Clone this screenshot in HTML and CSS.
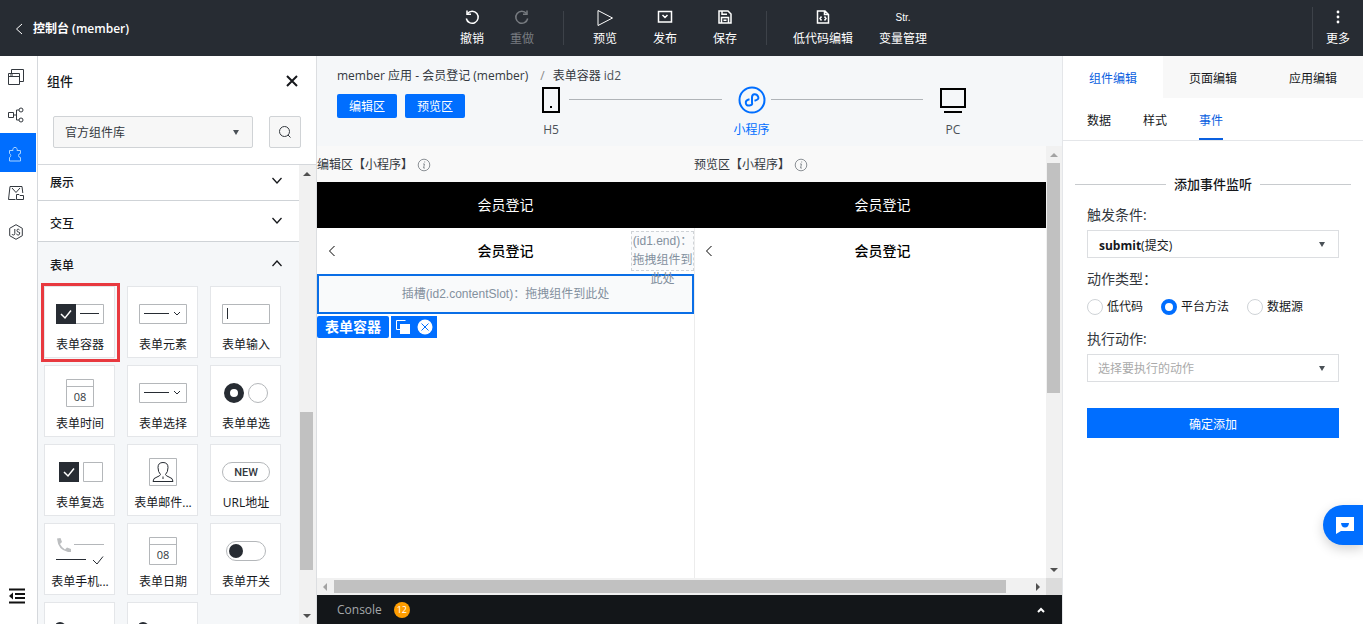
FILE: index.html
```html
<!DOCTYPE html>
<html lang="zh-CN">
<head>
<meta charset="utf-8">
<title>控制台 (member)</title>
<link rel="stylesheet" href="styles.css">
</head>
<body>
<header class="topbar">
  <a class="back" href="#"><svg width="8" height="12" viewBox="0 0 8 12"><path d="M7 1L1.500 6L7 11"/></svg>控制台 (member)</a>
  <nav class="tools">
    <button class="tool"><svg width="16" height="16" viewBox="0 0 16 16"><path d="M3.500 4.500A6 6 0 1 1 2.300 9.500"/><path d="M3 1.500V5.200H7"/></svg>撤销</button>
    <button class="tool off"><svg width="16" height="16" viewBox="0 0 16 16"><path d="M12.500 4.500A6 6 0 1 0 13.700 9.500"/><path d="M13 1.500V5.200H9"/></svg>重做</button>
    <span class="split"></span>
    <button class="tool mid"><svg width="18" height="18" viewBox="0 0 18 18"><path class="thin" d="M2 1.500V16.500L16.500 9Z"/></svg>预览</button>
    <button class="tool mid"><svg width="16" height="16" viewBox="0 0 16 16"><path d="M1.500 2.500H14.500V13H1.500ZM5.500 6L8 8.500L10.500 6"/></svg>发布</button>
    <button class="tool mid"><svg width="16" height="16" viewBox="0 0 16 16"><path d="M2 2H11L14 5V14H2ZM4.500 14V8.500H11.500V14M5 2V5.200H10M6.500 11.200H9.500"/></svg>保存</button>
    <span class="split second"></span>
    <button class="tool wide"><svg width="16" height="16" viewBox="0 0 16 16"><path d="M2.500 2H10L13.500 5.500V14H2.500ZM9.500 2V5.500H13M6.500 7.500L5 9.500L6.500 11.500M9.500 7.500L11 9.500L9.500 11.500"/></svg>低代码编辑</button>
    <button class="tool wide"><span class="str">Str.</span>变量管理</button>
  </nav>
  <button class="tool more"><svg width="16" height="16" viewBox="0 0 16 16"><g class="solid"><circle cx="8" cy="3" r="1.400"/><circle cx="8" cy="8" r="1.400"/><circle cx="8" cy="13" r="1.400"/></g></svg>更多</button>
</header>

<div class="work">
  <nav class="rail">
    <button aria-label="页面"><svg width="16" height="16" viewBox="0 0 16 16"><path d="M.5 4.500H11.500V15.500H.5ZM.5 7.500H11.500M3.500 4.500V.5H15.500V12.500H11.500M2 6H5"/></svg></button>
    <button aria-label="流程"><svg width="16" height="16" viewBox="0 0 16 16"><path d="M.5 5.500H5.500V10.500H.5ZM5.500 8H8.500M11 3H8.500V13H11"/><circle cx="13" cy="3" r="2"/><circle cx="13" cy="13" r="2"/></svg></button>
    <button class="on" aria-label="组件"><svg width="16" height="16" viewBox="0 0 16 16"><path d="M1.500 4.500H5A2.200 2.200 0 1 1 9 4.500H12.500V7.500A2 2 0 1 0 12.500 11.500V15H1.500V11.500A2.200 2.200 0 0 0 1.500 7.500Z"/></svg></button>
    <button aria-label="素材"><svg width="16" height="16" viewBox="0 0 16 16"><path d="M7.500 14.500H.5L2 1.500H14L14.800 8M4 3L8 7.500L12 3"/><path d="M8.500 9.500H11L12 10.500H15.500V14.500H8.500Z"/></svg></button>
    <button aria-label="脚本"><svg width="16" height="16" viewBox="0 0 16 16"><path d="M8 .7L14.300 4.300V11.700L8 15.300L1.700 11.700V4.300Z"/><path d="M6.800 5V9.500Q6.800 11 5.500 11T4 10M11.500 6Q10.800 5 9.800 5.200T9 6.800T10.800 8.200T11.500 10T9.800 11T8.300 10"/></svg></button>
    <button class="fold" aria-label="收起"><svg width="18" height="16" viewBox="0 0 18 16"><path d="M1 1.500H17M7 6H17M7 10H17M1 14.500H17"/><path class="solid" d="M5 4.500V11.500L1 8Z"/></svg></button>
  </nav>

  <aside class="panel">
    <div class="panel-head">
      <h2>组件</h2>
      <button class="close" aria-label="关闭"><svg width="12" height="12" viewBox="0 0 12 12"><path d="M1 1L11 11M11 1L1 11"/></svg></button>
    </div>
    <div class="finder">
      <span class="drop gray"><select aria-label="组件库"><option>官方组件库</option></select></span>
      <button class="search" aria-label="搜索"><svg width="14" height="14" viewBox="0 0 14 14"><circle cx="6.500" cy="6.500" r="5"/><path d="M10 10L12.500 12.500"/></svg></button>
    </div>
    <div class="scroller">
      <div class="list">
        <button class="group first">展示<svg width="12" height="8" viewBox="0 0 12 8"><path d="M1.500 1L6 6L10.500 1"/></svg></button>
        <button class="group">交互<svg width="12" height="8" viewBox="0 0 12 8"><path d="M1.500 1L6 6L10.500 1"/></svg></button>
        <section class="open">
          <button class="group">表单<svg width="12" height="8" viewBox="0 0 12 8"><path d="M1.500 7L6 2L10.500 7"/></svg></button>
          <div class="cards">
            <div class="card picked"><svg width="48" height="30" viewBox="0 0 48 30"><path class="line" d="M20 5.500H47.500V24.500H20"/><path class="fill" d="M0 5H20V25H0Z"/><path class="white" d="M5 15L9 19L15 11.500"/><path class="dark" d="M24 14.500H43"/></svg>表单容器</div>
            <div class="card"><svg width="48" height="30" viewBox="0 0 48 30"><path class="line" d="M.5 5.500H47.500V24.500H.5Z"/><path class="dark" d="M5 14.500H30M35 13L38 16L41 13"/></svg>表单元素</div>
            <div class="card"><svg width="48" height="30" viewBox="0 0 48 30"><path class="line" d="M.5 5.500H47.500V24.500H.5Z"/><path class="dark" d="M5.500 9V20"/></svg>表单输入</div>
            <div class="card"><svg width="48" height="30" viewBox="0 0 48 30"><path class="line" d="M10.500 1.500H37.500V28.500H10.500ZM10.500 8.500H37.500"/><text x="24" y="23">08</text></svg>表单时间</div>
            <div class="card"><svg width="48" height="30" viewBox="0 0 48 30"><path class="line" d="M.5 5.500H47.500V24.500H.5Z"/><path class="dark" d="M5 14.500H30M35 13L38 16L41 13"/></svg>表单选择</div>
            <div class="card"><svg width="48" height="30" viewBox="0 0 48 30"><circle class="ring" cx="12" cy="15" r="7"/><circle class="line" cx="36" cy="15" r="9.500"/></svg>表单单选</div>
            <div class="card"><svg width="48" height="30" viewBox="0 0 48 30"><path class="fill" d="M3 5H23V25H3Z"/><path class="white" d="M8 15L12 19L18 11.500"/><path class="line" d="M27.500 5.500H46.500V24.500H27.500Z"/></svg>表单复选</div>
            <div class="card"><svg width="48" height="30" viewBox="0 0 48 30"><path class="line" d="M10.500 1.500H37.500V28.500H10.500Z"/><path class="dark" d="M21.500 17.500Q19 15 19 10.500Q19 5.500 24 5.500T29 10.500Q29 15 26.500 17.500Q27 19 30 20Q34 21 34 24.500H14Q14 21 18 20Q21 19 21.500 17.500ZM24 19.500V22"/></svg>表单邮件...</div>
            <div class="card"><svg width="48" height="30" viewBox="0 0 48 30"><rect class="line" x=".5" y="5.500" width="47" height="19" rx="9.500"/><text class="new" x="24" y="19">NEW</text></svg>URL地址</div>
            <div class="card"><svg width="48" height="30" viewBox="0 0 48 30"><path class="pale" d="M1 2.500L4.500 2L6 6L4 8Q6 12 9 13.500L11 11.500L15 13V16H12Q2 14 1 2.500Z"/><path class="line" d="M18 8.500H48"/><path class="dark" d="M0 23.500H30M37 24L41 28L47 20.500"/></svg>表单手机...</div>
            <div class="card"><svg width="48" height="30" viewBox="0 0 48 30"><path class="line" d="M10.500 1.500H37.500V28.500H10.500ZM10.500 8.500H37.500"/><text x="24" y="23">08</text></svg>表单日期</div>
            <div class="card"><svg width="48" height="30" viewBox="0 0 48 30"><rect class="line" x="4.500" y="5.500" width="39" height="19" rx="9.500"/><circle class="fill" cx="14" cy="15" r="7"/></svg>表单开关</div>
            <div class="card"><svg width="48" height="30" viewBox="0 0 48 30"><circle class="fill" cx="4" cy="13" r="6"/></svg></div>
            <div class="card"><svg width="48" height="30" viewBox="0 0 48 30"><circle class="fill" cx="4" cy="13" r="6"/></svg></div>
          </div>
        </section>
      </div>
      <div class="bar-v"><i class="tri up"></i><i class="thumb low"></i><i class="tri down"></i></div>
    </div>
  </aside>

  <main class="stage">
    <div class="stage-head">
      <div class="crumbs"><span>member 应用 - 会员登记 (member)</span><span class="slash">/</span><span>表单容器 <span class="dim">id2</span></span></div>
      <div class="stage-row">
        <button class="blue">编辑区</button>
        <button class="blue">预览区</button>
        <div class="steps">
          <div class="step h5"><svg width="20" height="28" viewBox="0 0 20 28"><path d="M2 2H18V26H2Z"/><path class="solid" d="M9 20H11V22H9Z"/></svg>H5</div>
          <i class="wire one"></i>
          <div class="step mp"><svg width="28" height="28" viewBox="0 0 28 28"><circle cx="14" cy="14" r="12.500"/><path d="M11.500 13.200Q7.500 14 7.800 17T11.500 19.500T14 16.500V11.500Q14 8.500 16.500 8.300T20.200 10.800T16.500 14.800"/></svg>小程序</div>
          <i class="wire two"></i>
          <div class="step pc"><svg width="26" height="28" viewBox="0 0 26 28"><path d="M1 3H25V21H1ZM4 26H22"/></svg>PC</div>
        </div>
      </div>
    </div>

    <div class="canvas">
      <div class="phones">
        <section class="phone">
          <div class="caption">编辑区【小程序】<svg width="14" height="14" viewBox="0 0 14 14"><circle cx="7" cy="7" r="5.800"/><path d="M7.700 3.500V4.500M6 6H7.500L6.500 10H8"/></svg></div>
          <div class="black">会员登记</div>
          <div class="nav"><svg width="8" height="12" viewBox="0 0 8 12"><path d="M6.500 1L1.500 6L6.500 11"/></svg>会员登记<div class="endslot">(id1.end)：拖拽组件到此处</div></div>
          <div class="slot">插槽(id2.contentSlot)：拖拽组件到此处</div>
          <div class="tags"><span class="tag">表单容器</span><span class="acts"><button aria-label="复制"><svg width="14" height="14" viewBox="0 0 14 14"><path d="M.5 9.500V.5H9.500M.5 9.500H4"/><path class="solid" d="M4 4H14V14H4Z"/></svg></button><button aria-label="删除"><svg width="16" height="16" viewBox="0 0 16 16"><circle class="solid" cx="8" cy="8" r="7.500"/><path class="cross" d="M4.500 4.500L11.500 11.500M11.500 4.500L4.500 11.500"/></svg></button></span></div>
        </section>
        <section class="phone">
          <div class="caption">预览区【小程序】<svg width="14" height="14" viewBox="0 0 14 14"><circle cx="7" cy="7" r="5.800"/><path d="M7.700 3.500V4.500M6 6H7.500L6.500 10H8"/></svg></div>
          <div class="black">会员登记</div>
          <div class="nav"><svg width="8" height="12" viewBox="0 0 8 12"><path d="M6.500 1L1.500 6L6.500 11"/></svg>会员登记</div>
        </section>
      </div>
      <div class="bar-v"><i class="tri up faint"></i><i class="thumb high"></i><i class="tri down"></i></div>
      <div class="bar-h"><i class="tri left faint"></i><i class="thumb-h"></i><i class="tri right"></i></div>
      <div class="corner"></div>
    </div>

    <div class="console">Console<span class="count">12</span><button aria-label="展开"><svg width="8" height="6" viewBox="0 0 8 6"><path d="M1 5L4 2L7 5"/></svg></button></div>
  </main>

  <aside class="props">
    <div class="tabs"><button class="on">组件编辑</button><button>页面编辑</button><button>应用编辑</button></div>
    <div class="subtabs"><button>数据</button><button>样式</button><button class="on">事件</button></div>
    <h3 class="legend">添加事件监听</h3>
    <form class="form">
      <label for="trigger">触发条件:</label>
      <span class="drop"><select id="trigger"><option value="submit"></option></select><span class="value"><b>submit</b>(提交)</span></span>
      <div class="label" id="kind">动作类型：</div>
      <div class="radios" role="radiogroup" aria-labelledby="kind">
        <label><input type="radio" name="kind">低代码</label>
        <label><input type="radio" name="kind" checked>平台方法</label>
        <label><input type="radio" name="kind">数据源</label>
      </div>
      <label for="action">执行动作:</label>
      <span class="drop"><select id="action" class="empty"><option>选择要执行的动作</option></select></span>
      <button class="submit" type="button">确定添加</button>
    </form>
    <button class="chat" aria-label="客服"><svg width="18" height="18" viewBox="0 0 18 18"><path class="solid" d="M0 1H18V15H5L0 18Z"/><path class="smile" d="M5 7H13Q12.500 11.500 9 11.500T5 7Z"/></svg></button>
  </aside>
</div>
</body>
</html>
```
FILE: styles.css
```css
* { box-sizing: border-box; }
body {
  margin: 0;
  height: 100vh;
  display: flex;
  flex-direction: column;
  overflow: hidden;
  font: 12px/20px "Open Sans", "Noto Sans CJK SC", sans-serif;
  color: #16181c;
  background: #fff;
}
button, select, input { font: inherit; color: inherit; margin: 0; }
button { border: 0; padding: 0; background: none; }
svg { display: block; flex: none; fill: none; stroke: currentColor; }
h2, h3 { margin: 0; }
.solid { fill: currentColor; stroke: none; }

/* Top bar */
.topbar { flex: none; height: 56px; display: flex; align-items: center; background: #272c33; color: #fff; }
.back {
  flex: 0 0 447px;
  display: flex;
  align-items: center;
  gap: 10px;
  padding: 2px 0 0 15px;
  color: #fff;
  font-weight: 600;
  text-decoration: none;
}
.tools { display: flex; align-items: center; }
.tool { width: 50px; height: 42px; display: flex; flex-direction: column; align-items: center; justify-content: space-between; padding-top: 2px; white-space: nowrap; }
.tool svg { stroke-width: 1.5; }
.tool .thin { stroke-width: 1; }
.tool.mid { width: 60px; }
.tool.wide { width: 80px; }
.tool.off { color: #777b80; }
.str { font: 10px/18px "Liberation Sans", sans-serif; }
.split { width: 1px; height: 34px; margin: 0 11px 0 16px; background: #3d4249; }
.split.second { margin: 0 16px 0 11px; }
.tool.more { margin-left: auto; border-left: 1px solid #3d4249; width: 51px; }

.work { flex: 1; min-height: 0; display: flex; }

/* Icon rail */
.rail { flex: 0 0 38px; display: flex; flex-direction: column; border-right: 1px solid #d5d8dc; color: #33383e; }
.rail button { width: 36px; height: 39px; display: grid; place-items: center; padding: 2px 4px 0 0; }
.rail button:first-child { height: 38px; margin-top: 1px; }
.rail button:nth-child(2) { height: 38px; }
.rail .on { background: #006eff; color: #a8d3ff; }
.rail .fold { margin-top: auto; margin-bottom: 9px; padding: 0 2px 0 0; stroke-width: 2; color: #111; }

/* Component panel */
.panel { flex: 0 0 279px; display: flex; flex-direction: column; border-right: 1px solid #dcdee1; }
.panel-head { display: flex; justify-content: space-between; align-items: center; padding: 15px 18px 1px 9px; }
.panel-head h2 { font-size: 13px; line-height: 20px; font-weight: 500; }
.close svg { stroke-width: 2; }
.finder { display: flex; gap: 16px; padding: 24px 15px 16px; }
.drop { position: relative; display: block; flex: 1; }
.drop select {
  display: block;
  width: 100%;
  height: 28px;
  padding: 2px 24px 0 10px;
  appearance: none;
  border: 1px solid #dcdee1;
  border-radius: 0;
  background: #fff;
}
.drop.gray select { height: 32px; padding-left: 11px; border-color: #d0d3d6; border-radius: 2px; background: #f7f7f7; color: #33383e; }
.drop::after {
  content: "";
  position: absolute;
  right: 14px;
  top: calc(50% - 2px);
  border: 3px solid transparent;
  border-top: 5px solid #4b5157;
  border-bottom: 0;
  pointer-events: none;
}
.drop .empty { color: #aaa; }
.value { position: absolute; left: 12px; top: 6px; pointer-events: none; }
.search { width: 32px; height: 32px; display: grid; place-items: center; border: 1px solid #d0d3d6; border-radius: 2px; background: #f7f7f7; color: #33383e; }
.scroller { flex: 1; min-height: 0; display: flex; border-top: 1px solid #d5d8dc; }
.list { flex: 1; overflow: hidden; }
.group { width: 100%; height: 41px; display: flex; justify-content: space-between; align-items: center; padding: 5px 16px 0 12px; border-bottom: 1px solid #cfd3d7; font-weight: 500; }
.group svg { stroke-width: 1.3; margin-bottom: 5px; }
.group.first { height: 36px; padding-top: 1px; }
.open { background: #f5f7f9; }
.open .group { border: 0; height: 44px; padding-top: 3px; }
.cards { display: grid; grid-template-columns: repeat(3, 71px); gap: 7px 12px; padding: 0 6px; }
.card { position: relative; height: 72px; display: flex; flex-direction: column; align-items: center; padding: 12px 0 0 1px; gap: 6px; border: 1px solid #e4e6e9; background: #fff; white-space: nowrap; }
.picked::after { content: ""; position: absolute; inset: -4px -6px -5px -4px; border: 3px solid #e8393f; }
.line { stroke: #b4b7ba; }
.dark { stroke: #272c33; }
.fill { fill: #272c33; stroke: none; }
.pale { fill: #bcbec0; stroke: none; }
.white { stroke: #fff; stroke-width: 1.5; }
.ring { stroke: #272c33; stroke-width: 6; }
.card text { fill: #33383e; stroke: none; font: 11px "Open Sans", sans-serif; text-anchor: middle; }
.card .new { font: 500 11px Roboto, sans-serif; }

/* Scrollbars */
.bar-v { flex: 0 0 17px; display: flex; flex-direction: column; align-items: center; padding: 7px 2px 6px 0; background: #f1f1f1; }
.thumb { width: 13px; background: #c1c1c1; }
.thumb.low { margin: 236px 0 auto; height: 158px; }
.thumb.high { margin: 6px 0 auto; height: 230px; }
.tri { border: 4px solid transparent; }
.tri.up { border-top: 0; border-bottom-color: #505050; }
.tri.down { border-bottom: 0; border-top-color: #505050; }
.tri.left { border-left: 0; border-right-color: #505050; }
.tri.right { border-right: 0; border-left-color: #505050; }
.tri.up.faint { border-bottom-color: #a3a3a3; }
.tri.left.faint { border-right-color: #a3a3a3; }

/* Stage */
.stage { flex: 1; min-width: 0; display: flex; flex-direction: column; background: #fff; }
.stage-head { flex: none; height: 90px; padding: 10px 0 0 20px; background: #f5f7f9; }
.crumbs { display: flex; color: #33383e; }
.slash { color: #888; margin: 0 8px 0 12px; }
.dim { color: #4b5157; }
.stage-row { display: flex; align-items: flex-start; gap: 8px; }
.blue { width: 60px; height: 24px; margin-top: 8px; padding-top: 2px; border-radius: 2px; background: #006eff; color: #fff; }
.steps { flex: 1; display: flex; margin: 0 97px 0 68px; }
.step { display: flex; flex-direction: column; align-items: center; gap: 6px; color: #4b5157; white-space: nowrap; }
.step svg { color: #000; stroke-width: 2; }
.h5 { width: 20px; }
.mp { width: 36px; color: #006eff; }
.mp svg { color: #006eff; }
.pc { width: 26px; }
.wire { flex: 1; height: 1px; margin: 13px 12px 0 8px; background: #b0b4b8; }
.wire.two { margin: 13px 17px 0 1px; }

.canvas { flex: 1; min-height: 0; display: grid; grid-template: 1fr 17px / 1fr 17px; }
.phones { display: flex; overflow: hidden; }
.phone { flex: 0 0 377px; }
.phone + .phone { box-shadow: inset 1px 0 #ececec; }
.caption { height: 36px; display: flex; align-items: center; gap: 4px; padding-top: 1px; background: #f9f9f9; color: #33383e; }
.caption svg { color: #8c9196; }
.black { height: 46px; display: grid; place-items: center; background: #000; color: #fff; font-size: 14px; }
.nav { position: relative; height: 46px; display: grid; place-items: center; font-size: 14px; font-weight: 500; color: #000; }
.nav svg { position: absolute; left: 11px; top: 17px; }
.endslot {
  position: absolute;
  z-index: 1;
  right: 0;
  top: 3px;
  width: 63px;
  height: 40px;
  border: 1px dashed #cfd3d7;
  background: #fafbfc;
  color: #83909e;
  font: 12px/19px "Liberation Sans", "Noto Sans CJK SC", sans-serif;
  text-align: center;
}
.slot {
  height: 40px;
  display: grid;
  place-items: center;
  border: 2px solid #0a6ee6;
  background: #f9fafb;
  color: #83909e;
  font-family: "Liberation Sans", "Noto Sans CJK SC", sans-serif;
}
.tags { display: flex; gap: 2px; padding-top: 2px; }
.tag { width: 72px; height: 22px; border-radius: 2px; background: #006eff; color: #fff; font-size: 14px; line-height: 22px; font-weight: 700; text-align: center; }
.acts { display: flex; gap: 7px; align-items: center; padding: 0 4px 0 5px; background: #006eff; color: #fff; }
.cross { stroke: #006eff; }
.bar-h { display: flex; align-items: center; padding: 0 6px; background: #f1f1f1; }
.thumb-h { flex: 0 1 672px; height: 13px; margin: 0 auto 0 7px; background: #c1c1c1; }
.corner { background: #dcdcdc; }

.console { flex: none; height: 29px; display: flex; align-items: center; gap: 12px; padding: 1px 18px 0 20px; background: #131619; color: #a5a8ab; }
.count { width: 16px; height: 16px; border-radius: 50%; background: #ff9d00; color: #fff; font-size: 9px; line-height: 16px; text-align: center; }
.console button { margin-left: auto; color: #fff; stroke-width: 2; }

/* Property panel */
.props { position: relative; flex: 0 0 300px; box-shadow: -1px 0 #e4e6e9; }
.tabs { display: grid; grid-template-columns: repeat(3, 1fr); }
.tabs button { height: 42px; padding-top: 3px; background: #f8f8f8; }
.tabs .on { background: #fff; color: #0a60e0; }
.subtabs { height: 43px; display: flex; gap: 32px; padding: 0 24px; border-bottom: 1px solid #e4e6e9; }
.subtabs button { padding-top: 3px; }
.subtabs .on { color: #0a60e0; box-shadow: inset 0 -2px #0a60e0; }
.legend { display: flex; align-items: center; gap: 8px; margin: 33px 12px 11px; font-size: 13px; line-height: 20px; font-weight: 500; }
.legend::before, .legend::after { content: ""; flex: 1; height: 1px; background: #c8cbce; }
.form { padding: 0 24px; }
.form > label, .label { display: block; margin: 11px 0 5px; font-size: 14px; line-height: 20px; color: #33383e; }
.radios { display: flex; gap: 18px; margin: 8px 0 12px; }
.radios label { display: flex; align-items: center; gap: 4px; }
.radios input { appearance: none; width: 16px; height: 16px; border: 1px solid #cfd3d7; border-radius: 50%; background: #fff; }
.radios input:checked { border: 4px solid #006eff; }
.submit { display: block; width: 100%; height: 30px; margin-top: 26px; padding-top: 3px; background: #006eff; color: #fff; }
.chat {
  position: absolute;
  right: 0;
  bottom: 79px;
  width: 40px;
  height: 40px;
  display: grid;
  place-items: center;
  padding-left: 4px;
  border-radius: 20px 0 0 20px;
  background: #006eff;
  color: #fff;
  box-shadow: 0 4px 12px rgba(0, 0, 0, .18);
}
.smile { fill: #006eff; stroke: none; }
```
